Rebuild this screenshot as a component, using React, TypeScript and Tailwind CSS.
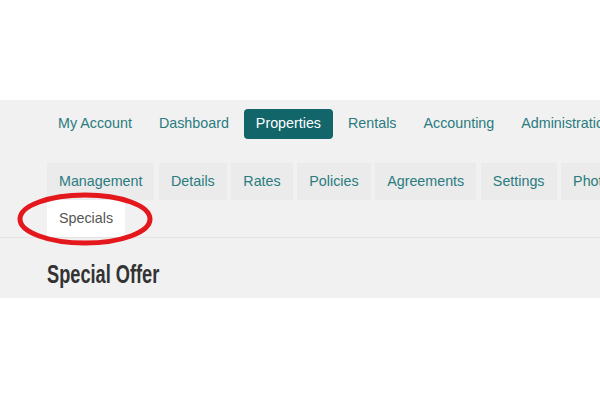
import React from 'react';

const topNav = ['My Account', 'Dashboard', 'Properties', 'Rentals', 'Accounting', 'Administration'];
const tabs = ['Management', 'Details', 'Rates', 'Policies', 'Agreements', 'Settings', 'Photos', 'Specials'];

export default function App() {
  return (
    <div className="w-[600px] h-[400px] bg-white pt-[100px] overflow-hidden" style={{ fontFamily: '"Liberation Sans", Arial, sans-serif' }}>
      <div className="relative bg-[#f1f1f1] h-[198px] overflow-hidden">
        {/* main nav */}
        <nav className="flex gap-[3px] pl-[46px] pt-[9px] whitespace-nowrap">
          {topNav.map((item) =>
            item === 'Properties' ? (
              <span key={item} className="h-[30px] px-3 flex items-center rounded-[4px] bg-[#12666a] text-white text-[14.3px]">
                {item}
              </span>
            ) : (
              <span key={item} className="h-[30px] px-3 flex items-center text-[#2a7b7f] text-[14.3px]">
                {item}
              </span>
            )
          )}
        </nav>

        {/* sub tabs */}
        <div className="mt-[24px] border-b border-[#e3e3e3]">
          <div className="w-[667px] pl-[47px] flex flex-wrap gap-x-[4.6px] whitespace-nowrap">
            {tabs.map((tab) =>
              tab === 'Specials' ? (
                <span key={tab} className="h-[37px] px-3 flex items-center bg-white text-[#555555] text-[14.3px]">
                  {tab}
                </span>
              ) : (
                <span key={tab} className="h-[37px] px-3 flex items-center bg-[#ebebeb] text-[#2a7b7f] text-[14.3px]">
                  {tab}
                </span>
              )
            )}
          </div>
        </div>

        <h1 className="pl-[47px] mt-[19px] text-[26px] leading-[34px] font-bold text-[#333333]">
          <span className="inline-block origin-left scale-x-[0.7]">Special Offer</span>
        </h1>

        {/* red highlight circle */}
        <svg className="absolute left-0 top-[90px] pointer-events-none" width="170" height="60" viewBox="0 0 170 60">
          <ellipse cx="85" cy="29" rx="65" ry="24" fill="none" stroke="#e3171c" strokeWidth="5" />
        </svg>
      </div>
    </div>
  );
}
